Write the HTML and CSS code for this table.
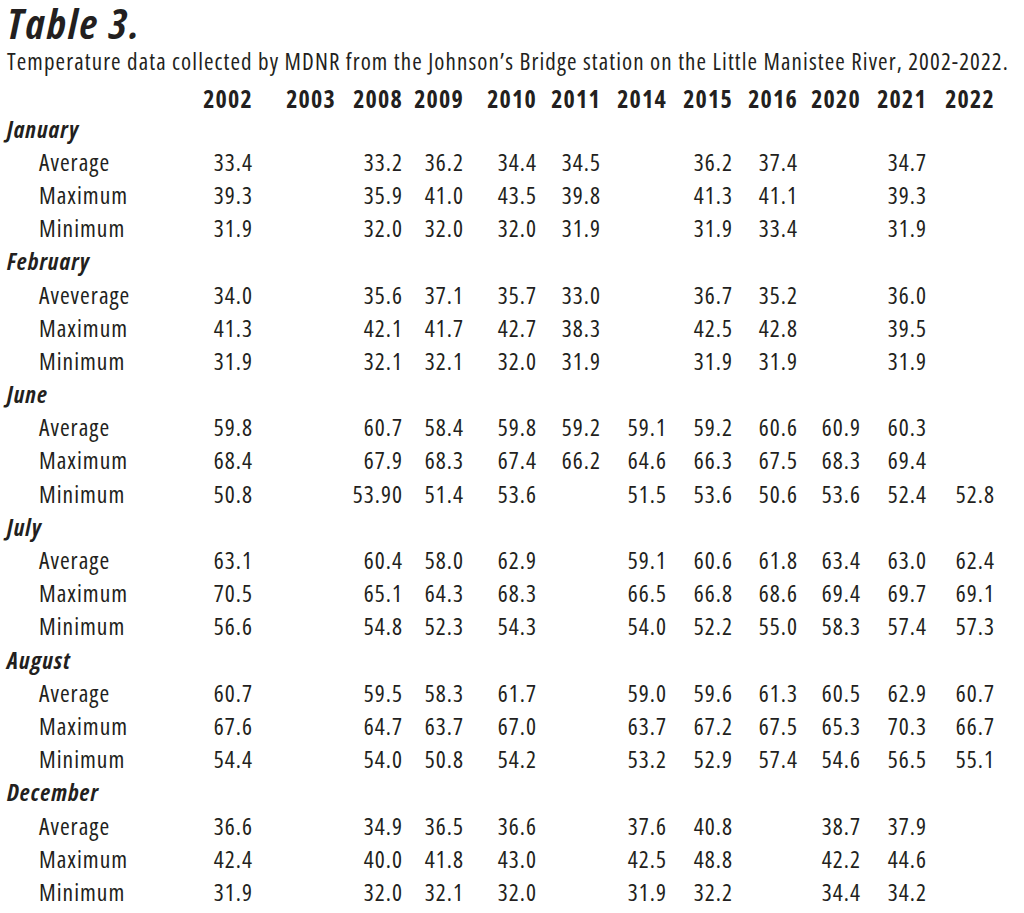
FILE: index.html
```html
<!DOCTYPE html>
<html lang="en">
<head>
<meta charset="utf-8">
<title>Table 3</title>
<link rel="stylesheet" href="styles.css">
</head>
<body>
<div class="page">
  <h1 class="title">Table 3.</h1>
  <p class="caption">Temperature data collected by MDNR from the Johnson’s Bridge station on the Little Manistee River, 2002-2022.</p>
  <div class="table">
    <div class="row head"><span></span><span>2002</span><span>2003</span><span>2008</span><span>2009</span><span>2010</span><span>2011</span><span>2014</span><span>2015</span><span>2016</span><span>2020</span><span>2021</span><span>2022</span></div>

    <div class="row month"><span>January</span></div>
    <div class="row"><span class="lbl">Average</span><span>33.4</span><span></span><span>33.2</span><span>36.2</span><span>34.4</span><span>34.5</span><span></span><span>36.2</span><span>37.4</span><span></span><span>34.7</span><span></span></div>
    <div class="row"><span class="lbl">Maximum</span><span>39.3</span><span></span><span>35.9</span><span>41.0</span><span>43.5</span><span>39.8</span><span></span><span>41.3</span><span>41.1</span><span></span><span>39.3</span><span></span></div>
    <div class="row"><span class="lbl">Minimum</span><span>31.9</span><span></span><span>32.0</span><span>32.0</span><span>32.0</span><span>31.9</span><span></span><span>31.9</span><span>33.4</span><span></span><span>31.9</span><span></span></div>

    <div class="row month"><span>February</span></div>
    <div class="row"><span class="lbl">Aveverage</span><span>34.0</span><span></span><span>35.6</span><span>37.1</span><span>35.7</span><span>33.0</span><span></span><span>36.7</span><span>35.2</span><span></span><span>36.0</span><span></span></div>
    <div class="row"><span class="lbl">Maximum</span><span>41.3</span><span></span><span>42.1</span><span>41.7</span><span>42.7</span><span>38.3</span><span></span><span>42.5</span><span>42.8</span><span></span><span>39.5</span><span></span></div>
    <div class="row"><span class="lbl">Minimum</span><span>31.9</span><span></span><span>32.1</span><span>32.1</span><span>32.0</span><span>31.9</span><span></span><span>31.9</span><span>31.9</span><span></span><span>31.9</span><span></span></div>

    <div class="row month"><span>June</span></div>
    <div class="row"><span class="lbl">Average</span><span>59.8</span><span></span><span>60.7</span><span>58.4</span><span>59.8</span><span>59.2</span><span>59.1</span><span>59.2</span><span>60.6</span><span>60.9</span><span>60.3</span><span></span></div>
    <div class="row"><span class="lbl">Maximum</span><span>68.4</span><span></span><span>67.9</span><span>68.3</span><span>67.4</span><span>66.2</span><span>64.6</span><span>66.3</span><span>67.5</span><span>68.3</span><span>69.4</span><span></span></div>
    <div class="row"><span class="lbl">Minimum</span><span>50.8</span><span></span><span>53.90</span><span>51.4</span><span>53.6</span><span></span><span>51.5</span><span>53.6</span><span>50.6</span><span>53.6</span><span>52.4</span><span>52.8</span></div>

    <div class="row month"><span>July</span></div>
    <div class="row"><span class="lbl">Average</span><span>63.1</span><span></span><span>60.4</span><span>58.0</span><span>62.9</span><span></span><span>59.1</span><span>60.6</span><span>61.8</span><span>63.4</span><span>63.0</span><span>62.4</span></div>
    <div class="row"><span class="lbl">Maximum</span><span>70.5</span><span></span><span>65.1</span><span>64.3</span><span>68.3</span><span></span><span>66.5</span><span>66.8</span><span>68.6</span><span>69.4</span><span>69.7</span><span>69.1</span></div>
    <div class="row"><span class="lbl">Minimum</span><span>56.6</span><span></span><span>54.8</span><span>52.3</span><span>54.3</span><span></span><span>54.0</span><span>52.2</span><span>55.0</span><span>58.3</span><span>57.4</span><span>57.3</span></div>

    <div class="row month"><span>August</span></div>
    <div class="row"><span class="lbl">Average</span><span>60.7</span><span></span><span>59.5</span><span>58.3</span><span>61.7</span><span></span><span>59.0</span><span>59.6</span><span>61.3</span><span>60.5</span><span>62.9</span><span>60.7</span></div>
    <div class="row"><span class="lbl">Maximum</span><span>67.6</span><span></span><span>64.7</span><span>63.7</span><span>67.0</span><span></span><span>63.7</span><span>67.2</span><span>67.5</span><span>65.3</span><span>70.3</span><span>66.7</span></div>
    <div class="row"><span class="lbl">Minimum</span><span>54.4</span><span></span><span>54.0</span><span>50.8</span><span>54.2</span><span></span><span>53.2</span><span>52.9</span><span>57.4</span><span>54.6</span><span>56.5</span><span>55.1</span></div>

    <div class="row month"><span>December</span></div>
    <div class="row"><span class="lbl">Average</span><span>36.6</span><span></span><span>34.9</span><span>36.5</span><span>36.6</span><span></span><span>37.6</span><span>40.8</span><span></span><span>38.7</span><span>37.9</span><span></span></div>
    <div class="row"><span class="lbl">Maximum</span><span>42.4</span><span></span><span>40.0</span><span>41.8</span><span>43.0</span><span></span><span>42.5</span><span>48.8</span><span></span><span>42.2</span><span>44.6</span><span></span></div>
    <div class="row"><span class="lbl">Minimum</span><span>31.9</span><span></span><span>32.0</span><span>32.1</span><span>32.0</span><span></span><span>31.9</span><span>32.2</span><span></span><span>34.4</span><span>34.2</span><span></span></div>
  </div>
</div>
</body>
</html>
```

FILE: styles.css
```css
html, body {
  margin: 0;
  padding: 0;
  background: #ffffff;
}

.page {
  padding: 3px 0 0 7px;
  color: #231f20;
  font-family: "Open Sans", "Noto Sans", sans-serif;
  font-stretch: 75%;
}

.title {
  margin: 0;
  font-size: 42px;
  line-height: 40px;
  font-weight: 700;
  font-style: italic;
  letter-spacing: 2.2px;
}

.caption {
  margin: 7px 0 0;
  font-size: 23px;
  line-height: 22px;
  letter-spacing: 1.1px;
  white-space: nowrap;
}

.table {
  display: flex;
  flex-direction: column;
  margin-top: 11.5px;
  font-size: 23.5px;
  letter-spacing: 1px;
}

.row {
  display: grid;
  grid-template-columns: 193px 53px 83px 67px 61px 73px 64px 66px 66px 65px 63px 66px 68px;
  height: 33.2px;
  line-height: 33.2px;
  white-space: nowrap;
}

.row > span {
  text-align: right;
}

.row > span.lbl {
  text-align: left;
  padding-left: 32px;
}

.row.head {
  height: 29.1px;
  line-height: 29.1px;
  font-size: 24px;
  font-weight: 700;
  letter-spacing: 1.2px;
}

.row.month {
  display: block;
  font-weight: 700;
  font-style: italic;
}
```
